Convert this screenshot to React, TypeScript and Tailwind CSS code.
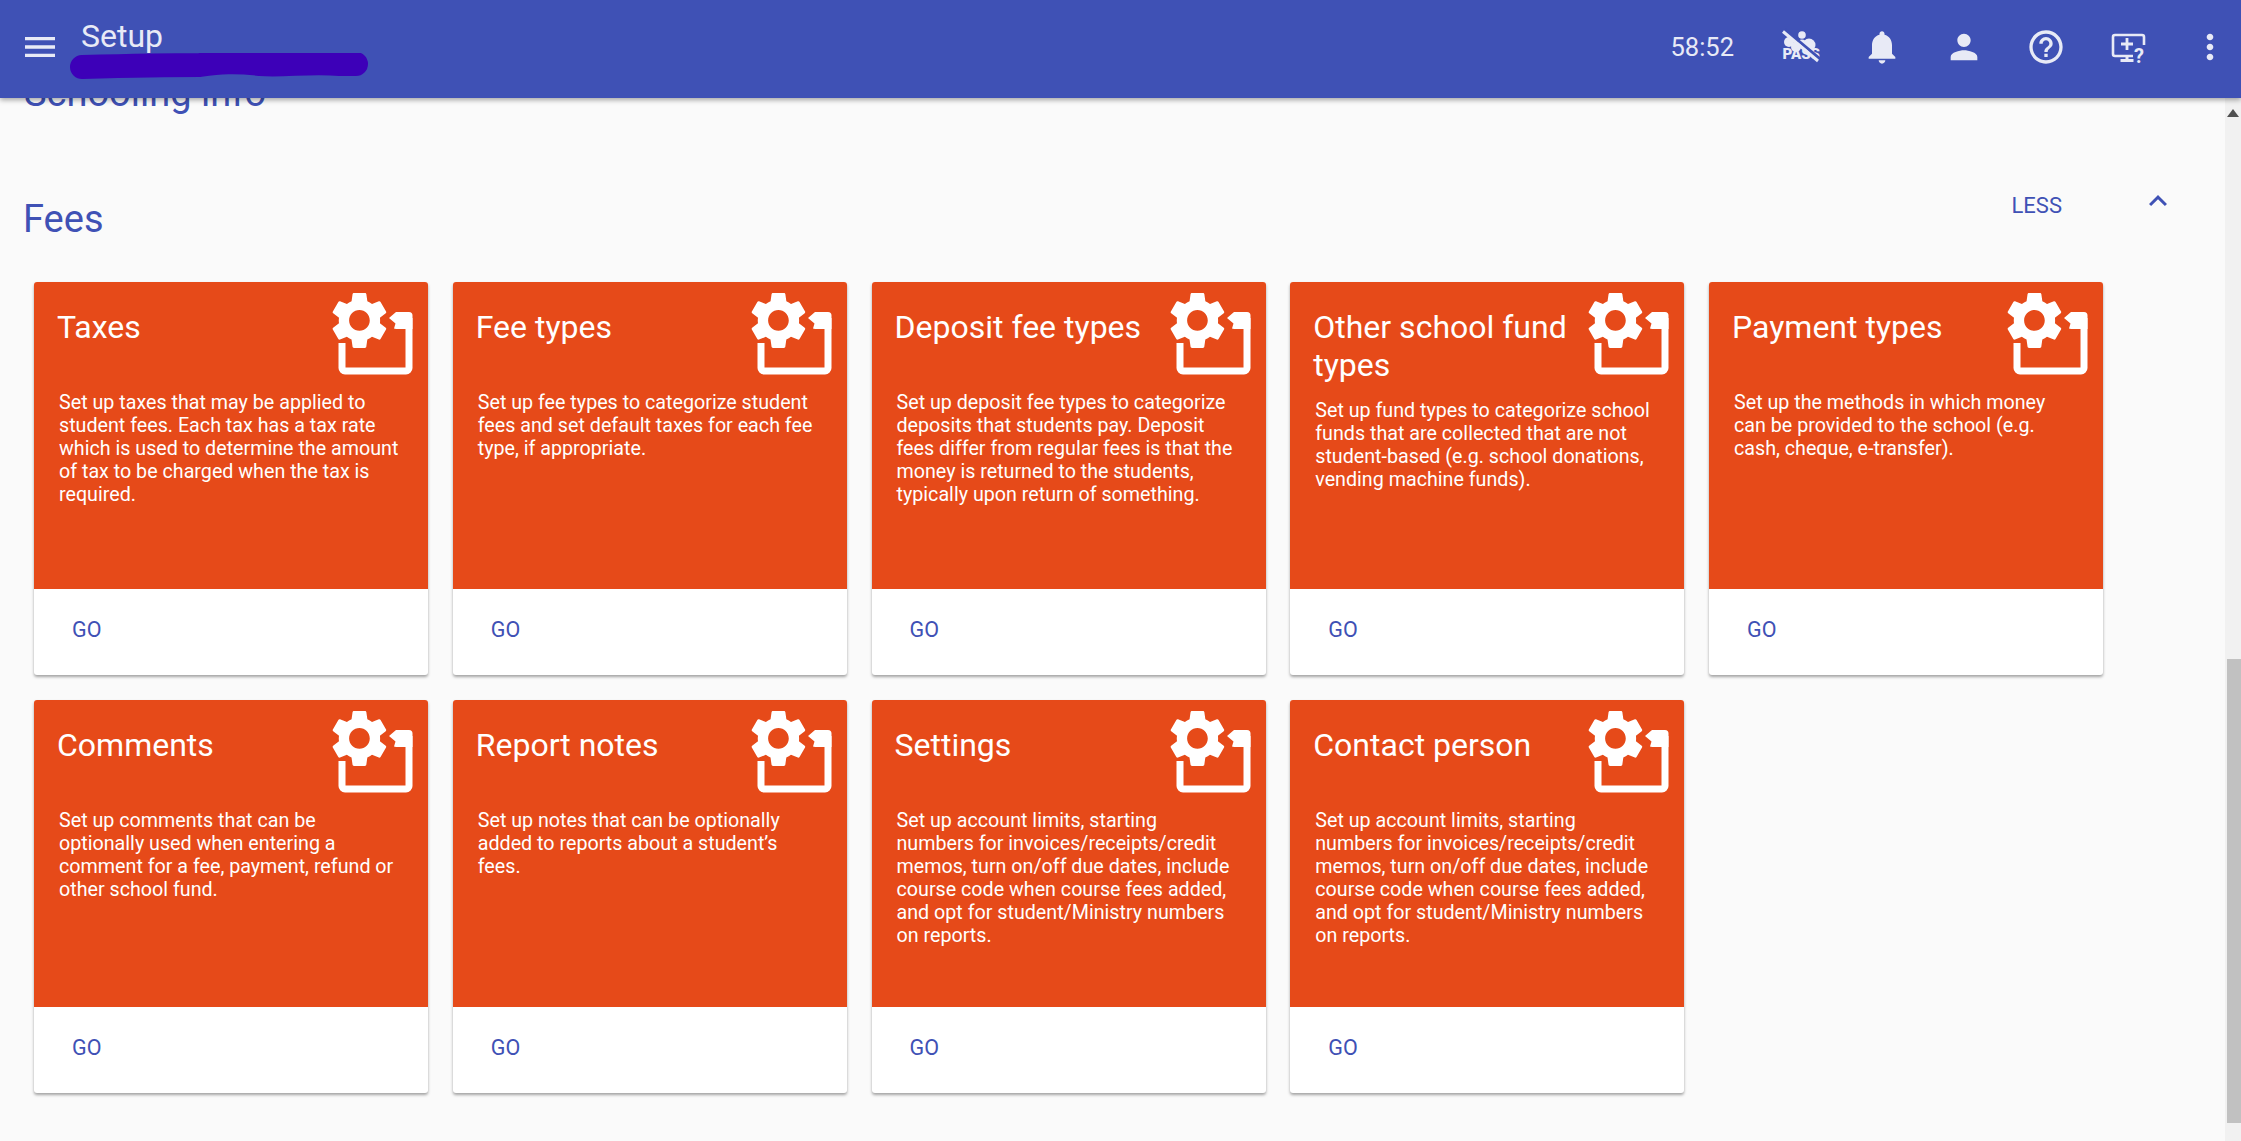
const cards = [
  { title: "Taxes", text: "Set up taxes that may be applied to student fees. Each tax has a tax rate which is used to determine the amount of tax to be charged when the tax is required." },
  { title: "Fee types", text: "Set up fee types to categorize student fees and set default taxes for each fee type, if appropriate." },
  { title: "Deposit fee types", text: "Set up deposit fee types to categorize deposits that students pay. Deposit fees differ from regular fees is that the money is returned to the students, typically upon return of something." },
  { title: "Other school fund types", text: "Set up fund types to categorize school funds that are collected that are not student-based (e.g. school donations, vending machine funds)." },
  { title: "Payment types", text: "Set up the methods in which money can be provided to the school (e.g. cash, cheque, e-transfer)." },
  { title: "Comments", text: "Set up comments that can be optionally used when entering a comment for a fee, payment, refund or other school fund." },
  { title: "Report notes", text: "Set up notes that can be optionally added to reports about a student’s fees." },
  { title: "Settings", text: "Set up account limits, starting numbers for invoices/receipts/credit memos, turn on/off due dates, include course code when course fees added, and opt for student/Ministry numbers on reports." },
  { title: "Contact person", text: "Set up account limits, starting numbers for invoices/receipts/credit memos, turn on/off due dates, include course code when course fees added, and opt for student/Ministry numbers on reports." },
];

const gearPath =
  "M19.14 12.94c.04-.3.06-.61.06-.94 0-.32-.02-.64-.07-.94l2.03-1.58c.18-.14.23-.41.12-.61l-1.92-3.32c-.12-.22-.37-.29-.59-.22l-2.39.96c-.5-.38-1.03-.7-1.62-.94l-.36-2.54c-.04-.24-.24-.41-.48-.41h-3.84c-.24 0-.43.17-.47.41l-.36 2.54c-.59.24-1.13.57-1.62.94l-2.39-.96c-.22-.08-.47 0-.59.22L2.74 8.87c-.12.21-.08.47.12.61l2.03 1.58c-.05.3-.09.63-.09.94s.02.64.07.94l-2.03 1.58c-.18.14-.23.41-.12.61l1.92 3.32c.12.22.37.29.59.22l2.39-.96c.5.38 1.03.7 1.62.94l.36 2.54c.05.24.24.41.48.41h3.84c.24 0 .44-.17.47-.41l.36-2.54c.59-.24 1.13-.56 1.62-.94l2.39.96c.22.08.47 0 .59-.22l1.92-3.32c.12-.22.07-.47-.12-.61l-2.01-1.58zM12 15.6c-1.98 0-3.6-1.62-3.6-3.6s1.62-3.6 3.6-3.6 3.6 1.62 3.6 3.6-1.62 3.6-3.6 3.6z";

// Gear sitting on the corner of an open box
const SetupIcon = () => (
  <svg viewBox="0 0 84 86" className="absolute top-[9px] right-[12px] w-[84px] h-[86px]" fill="#fff">
    <path d="M10 52V77a3 3 0 0 0 3 3H74a3 3 0 0 0 3-3V27" fill="none" stroke="#fff" strokeWidth="7" strokeLinejoin="round" />
    <path d="M57 27l7-6H77a3.500 3.500 0 0 1 3.500 3.500V38H64l-2-.5 1.500-5z" />
    <g transform="translate(-7 -5) scale(2.870)">
      <path d={gearPath} />
    </g>
  </svg>
);

const MaterialIcon = ({ d, className = "w-10 h-10" }: { d: string; className?: string }) => (
  <svg viewBox="0 0 24 24" className={className} fill="currentColor">
    <path d={d} />
  </svg>
);

const PassIcon = () => (
  <svg viewBox="0 0 40 40" className="w-10 h-10" fill="currentColor">
    <circle cx="22" cy="8" r="3.800" />
    <circle cx="29" cy="18" r="6.500" />
    <circle cx="22" cy="17" r="4.500" />
    <circle cx="9" cy="15" r="5" />
    <circle cx="16" cy="20" r="5" />
    <text x="2.500" y="32" fontSize="15" fontWeight="900" fontFamily="Roboto, sans-serif">
      PASS
    </text>
    <path d="M3 4.500l35 29.500" stroke="#3f51b5" strokeWidth="3" transform="translate(1.800 -2.200)" />
    <path d="M3 4.500l35 29.500" stroke="currentColor" strokeWidth="3" />
  </svg>
);

const MonitorHelpIcon = () => (
  <svg viewBox="0 0 40 40" className="w-10 h-10" fill="none" stroke="currentColor" strokeWidth="2.600">
    <path d="M25 29H7a2 2 0 0 1-2-2V10a2 2 0 0 1 2-2h27a2 2 0 0 1 2 2v8" />
    <path d="M19 11v12M13 17h12" strokeWidth="2.800" />
    <path d="M19 29v3M12.500 33.500h13" strokeWidth="3" />
    <text x="26" y="36" fontSize="20" fontWeight="700" fill="currentColor" stroke="none" fontFamily="Roboto, sans-serif">
      ?
    </text>
  </svg>
);

const Header = () => (
  <header className="relative z-10 h-[98px] shrink-0 flex items-center pl-5 pr-[11px] pb-[4px] bg-[#3f51b5] text-[#e8eaf6] shadow-[0_2px_5px_rgba(0,0,0,0.35)]">
    <MaterialIcon d="M3 18h18v-2H3v2zm0-5h18v-2H3v2zm0-7v2h18V6H3z" />
    <div className="self-start pt-[18px] ml-[21px] flex-1">
      <div className="text-[32px] leading-[36px]">Setup</div>
      {/* blacked out school name */}
      <svg viewBox="0 0 298 27" className="-ml-[11px] -mt-[1px] w-[298px] h-[27px]" fill="none">
        <path d="M12 14C50 13 90 12 130 12 150 9 165 8 190 11 215 13 240 8 270 11L286 11" stroke="#3d00b8" strokeWidth="24" strokeLinecap="round" />
      </svg>
    </div>
    <span className="mr-[46px] mt-[2px] text-[25.500px] leading-none">58:52</span>
    <div className="flex items-center gap-[42px]">
      <PassIcon />
      <MaterialIcon d="M12 22c1.100 0 2-.9 2-2h-4c0 1.100.89 2 2 2zm6-6v-5c0-3.070-1.640-5.640-4.500-6.320V4c0-.83-.67-1.500-1.500-1.500s-1.500.67-1.500 1.500v.68C7.630 5.360 6 7.920 6 11v5l-2 2v1h16v-1l-2-2z" />
      <MaterialIcon d="M12 12c2.210 0 4-1.790 4-4s-1.790-4-4-4-4 1.790-4 4 1.790 4 4 4zm0 2c-2.670 0-8 1.340-8 4v2h16v-2c0-2.660-5.330-4-8-4z" />
      <MaterialIcon d="M11 18h2v-2h-2v2zm1-16C6.480 2 2 6.480 2 12s4.480 10 10 10 10-4.480 10-10S17.520 2 12 2zm0 18c-4.410 0-8-3.590-8-8s3.590-8 8-8 8 3.590 8 8-3.590 8-8 8zm0-14c-2.210 0-4 1.790-4 4h2c0-1.100.9-2 2-2s2 .9 2 2c0 2-3 1.750-3 5h2c0-2.250 3-2.500 3-5 0-2.210-1.790-4-4-4z" />
      <MonitorHelpIcon />
      <MaterialIcon d="M12 8c1.100 0 2-.9 2-2s-.9-2-2-2-2 .9-2 2 .9 2 2 2zm0 2c-1.100 0-2 .9-2 2s.9 2 2 2 2-.9 2-2-.9-2-2-2zm0 6c-1.100 0-2 .9-2 2s.9 2 2 2 2-.9 2-2-.9-2-2-2z" />
    </div>
  </header>
);

const Card = ({ title, text }: { title: string; text: string }) => (
  <div className="h-[393px] flex flex-col bg-white rounded-[3px] overflow-hidden shadow-[0_2px_3px_rgba(0,0,0,0.35)]">
    <div className="relative h-[307px] shrink-0 bg-[#e64a19] text-white pl-[23px] pt-[26px]">
      <SetupIcon />
      <h3 className="w-[270px] min-h-[83px] pb-[15px] text-[32px] leading-[38px]">{title}</h3>
      <p className="ml-[2px] w-[341px] text-[19.700px] leading-[23px]">{text}</p>
    </div>
    <div className="flex-1 flex items-center pl-[38px] pb-[4px] text-[#3f51b5] text-[21.500px]">GO</div>
  </div>
);

const Scrollbar = () => (
  <aside className="w-4 shrink-0 bg-[#f1f1f1] flex flex-col items-end">
    <div className="mt-[11px] mr-[2px] w-0 h-0 border-x-[6px] border-x-transparent border-b-[8px] border-b-[#505050]" />
    <div className="mt-[542px] w-[14px] h-[464px] bg-[#c1c1c1]" />
  </aside>
);

export default function App() {
  return (
    <div className="h-screen flex flex-col overflow-hidden bg-[#fafafa] font-['Roboto',sans-serif]">
      <Header />
      <div className="flex-1 flex min-h-0">
        <main className="flex-1 min-w-0 pl-6 overflow-hidden">
          <h2 className="-mt-[26px] text-[38px] leading-[43px] text-[#3f51b5]">Schooling info</h2>
          <div className="mt-[83px] -ml-px flex items-start justify-between pr-[49px] text-[#3f51b5]">
            <h2 className="text-[38px] leading-[43px]">Fees</h2>
            <div className="-mt-[7px] flex items-center h-[30px]">
              <span className="text-[22px] leading-none">LESS</span>
              <span className="ml-[78px] -mt-[10px]">
                <MaterialIcon d="M12 8l-6 6 1.410 1.410L12 10.830l4.590 4.580L18 14z" className="w-9 h-9" />
              </span>
            </div>
          </div>
          <div className="mt-[41px] ml-[10px] grid grid-cols-[repeat(5,394px)] gap-x-[24.750px] gap-y-[25px]">
            {cards.map((c) => (
              <Card key={c.title} title={c.title} text={c.text} />
            ))}
          </div>
        </main>
        <Scrollbar />
      </div>
    </div>
  );
}
